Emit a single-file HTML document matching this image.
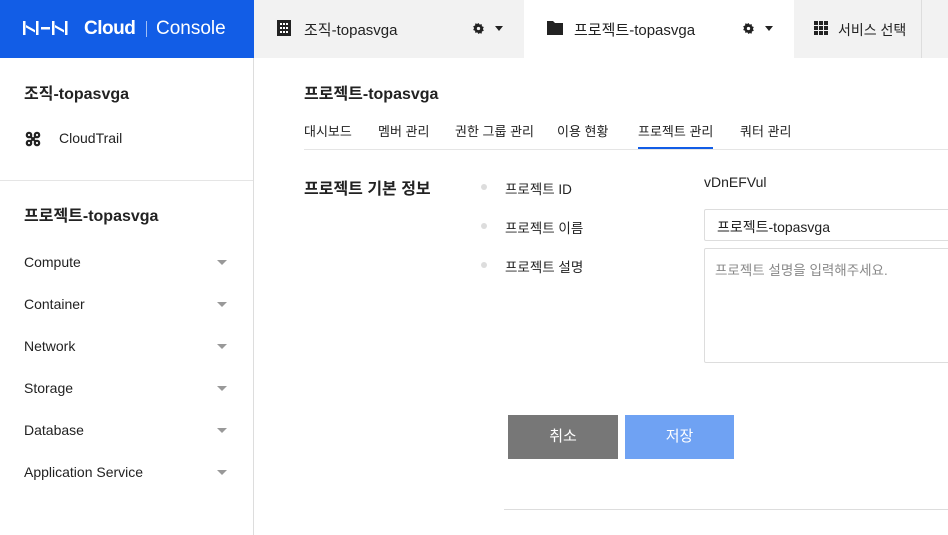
<!DOCTYPE html>
<html><head><meta charset="utf-8"><style>
*{margin:0;padding:0;box-sizing:border-box}
body{width:948px;height:535px;overflow:hidden;background:#fff;font-family:"Liberation Sans","Noto Sans CJK KR",sans-serif;color:#222;position:relative;font-size:14px}
.a{position:absolute;white-space:nowrap}
.logo{left:0;top:0;width:254px;height:58px;background:#125de6;color:#fff}
.tri{width:0;height:0;border-left:4px solid transparent;border-right:4px solid transparent;border-top:5px solid #222;position:absolute}
.stri{width:0;height:0;border-left:5px solid transparent;border-right:5px solid transparent;border-top:5px solid #999;position:absolute;left:217px}
.side{font-size:14px;color:#222;left:24px}
.bul{width:6px;height:6px;border-radius:50%;background:#ddd;position:absolute}
.tabs span{position:absolute;white-space:nowrap}
</style></head><body>
<div class="a logo">
<svg class="a" style="left:23px;top:21px" width="56" height="14" viewBox="0 0 56 14" fill="#fff"><rect x="0" y="0" width="2.5" height="14"/><path d="M3 4l9 5v2.5L3 6.5z"/><rect x="13" y="0" width="2.5" height="14"/><rect x="18" y="6" width="9" height="2.5"/><rect x="29" y="0" width="2.5" height="14"/><path d="M32 4l9 5v2.5l-9-5z"/><rect x="42" y="0" width="2.5" height="14"/></svg>
<div class="a" style="left:84px;top:18px;font-size:19px;font-weight:bold;letter-spacing:-0.5px">Cloud</div>
<div class="a" style="left:146px;top:21px;width:1px;height:16px;background:rgba(255,255,255,.6)"></div>
<div class="a" style="left:156px;top:18px;font-size:19px">Console</div>
</div>
<div class="a" style="left:254px;top:0;width:270px;height:58px;background:#f2f2f2"></div>
<div class="a" style="left:794px;top:0;width:127px;height:58px;background:#f2f2f2"></div>
<div class="a" style="left:921px;top:0;width:27px;height:58px;background:#f2f2f2;border-left:1px solid #ddd"></div>
<svg class="a" style="left:277px;top:20px" width="14" height="16" viewBox="0 0 14 16"><rect width="14" height="16" fill="#222"/><g fill="#fff"><rect x="3" y="3" width="2" height="2"/><rect x="6" y="3" width="2" height="2"/><rect x="9" y="3" width="2" height="2"/><rect x="3" y="7" width="2" height="2"/><rect x="6" y="7" width="2" height="2"/><rect x="9" y="7" width="2" height="2"/><rect x="3" y="11" width="2" height="2"/><rect x="6" y="11" width="2" height="2"/><rect x="9" y="11" width="2" height="2"/></g></svg>
<div class="a" style="left:304px;top:19px;font-size:15px">조직-topasvga</div>
<svg class="a" style="left:473px;top:23px" width="11" height="11" viewBox="0 0 12 12"><path d="M6 0l1.3 1.8 2.2-.6.2 2.3 2.1.9-1 2 1 2-2.1.9-.2 2.3-2.2-.6L6 12l-1.3-1.8-2.2.6-.2-2.3L.2 7.6l1-2-1-2 2.1-.9.2-2.3 2.2.6z" fill="#222"/><circle cx="6" cy="6" r="1.8" fill="#f2f2f2"/></svg>
<div class="tri" style="left:495px;top:26px"></div>
<svg class="a" style="left:547px;top:21px" width="16" height="14" viewBox="0 0 16 14"><path d="M0 0h6l2 2h8v12H0z" fill="#222"/></svg>
<div class="a" style="left:574px;top:19px;font-size:15px">프로젝트-topasvga</div>
<svg class="a" style="left:743px;top:23px" width="11" height="11" viewBox="0 0 12 12"><path d="M6 0l1.3 1.8 2.2-.6.2 2.3 2.1.9-1 2 1 2-2.1.9-.2 2.3-2.2-.6L6 12l-1.3-1.8-2.2.6-.2-2.3L.2 7.6l1-2-1-2 2.1-.9.2-2.3 2.2.6z" fill="#222"/><circle cx="6" cy="6" r="1.8" fill="#fff"/></svg>
<div class="tri" style="left:765px;top:26px"></div>
<svg class="a" style="left:814px;top:21px" width="14" height="14" viewBox="0 0 14 14" fill="#222"><rect width="4" height="4"/><rect x="5" width="4" height="4"/><rect x="10" width="4" height="4"/><rect y="5" width="4" height="4"/><rect x="5" y="5" width="4" height="4"/><rect x="10" y="5" width="4" height="4"/><rect y="10" width="4" height="4"/><rect x="5" y="10" width="4" height="4"/><rect x="10" y="10" width="4" height="4"/></svg>
<div class="a" style="left:838px;top:20px;font-size:14px">서비스 선택</div>

<div class="a" style="left:253px;top:58px;width:1px;height:477px;background:#ddd"></div>
<div class="a side" style="top:80px;font-size:16px;font-weight:bold">조직-topasvga</div>
<svg class="a" style="left:25px;top:131px" width="16" height="16" viewBox="0 0 16 16" fill="none" stroke="#222" stroke-width="2.2"><circle cx="4" cy="4" r="2.2"/><circle cx="12" cy="4" r="2.2"/><circle cx="4" cy="12" r="2.2"/><circle cx="12" cy="12" r="2.2"/><path d="M6 6l4 4M10 6l-4 4"/></svg>
<div class="a" style="left:59px;top:130px">CloudTrail</div>
<div class="a" style="left:0;top:180px;width:253px;height:1px;background:#e5e5e5"></div>
<div class="a side" style="top:202px;font-size:16px;font-weight:bold">프로젝트-topasvga</div>
<div class="a side" style="top:254px">Compute</div><div class="stri" style="top:260px"></div>
<div class="a side" style="top:296px">Container</div><div class="stri" style="top:302px"></div>
<div class="a side" style="top:338px">Network</div><div class="stri" style="top:344px"></div>
<div class="a side" style="top:380px">Storage</div><div class="stri" style="top:386px"></div>
<div class="a side" style="top:422px">Database</div><div class="stri" style="top:428px"></div>
<div class="a side" style="top:464px">Application Service</div><div class="stri" style="top:470px"></div>

<div class="a" style="left:304px;top:80px;font-size:16px;font-weight:bold">프로젝트-topasvga</div>
<div class="a tabs" style="left:304px;top:121px;font-size:13px">
<span style="left:0">대시보드</span><span style="left:74px">멤버 관리</span><span style="left:151px">권한 그룹 관리</span><span style="left:253px">이용 현황</span><span style="left:334px">프로젝트 관리</span><span style="left:436px">쿼터 관리</span></div>
<div class="a" style="left:304px;top:149px;width:644px;height:1px;background:#e5e5e5"></div>
<div class="a" style="left:638px;top:147px;width:75px;height:2px;background:#125de6"></div>

<div class="a" style="left:304px;top:175px;font-size:16px;font-weight:bold">프로젝트 기본 정보</div>
<div class="bul" style="left:481px;top:184px"></div><div class="a" style="left:505px;top:178px;font-size:13.5px">프로젝트 ID</div>
<div class="bul" style="left:481px;top:223px"></div><div class="a" style="left:505px;top:217px;font-size:13.5px">프로젝트 이름</div>
<div class="bul" style="left:481px;top:262px"></div><div class="a" style="left:505px;top:256px;font-size:13.5px">프로젝트 설명</div>
<div class="a" style="left:704px;top:174px">vDnEFVul</div>
<div class="a" style="left:704px;top:209px;width:260px;height:32px;border:1px solid #ddd;border-radius:2px;padding:7px 0 0 12px">프로젝트-topasvga</div>
<div class="a" style="left:704px;top:248px;width:260px;height:115px;border:1px solid #ddd;border-radius:2px;padding:10px 0 0 10px;color:#888;font-size:13.5px">프로젝트 설명을 입력해주세요.</div>
<div class="a" style="left:508px;top:415px;width:110px;height:44px;background:#777;color:#fff;font-size:15px;text-align:center;line-height:44px">취소</div>
<div class="a" style="left:625px;top:415px;width:109px;height:44px;background:#6fa2f3;color:#fff;font-size:15px;text-align:center;line-height:44px">저장</div>
<div class="a" style="left:504px;top:509px;width:444px;height:1px;background:#ddd"></div>
</body></html>
